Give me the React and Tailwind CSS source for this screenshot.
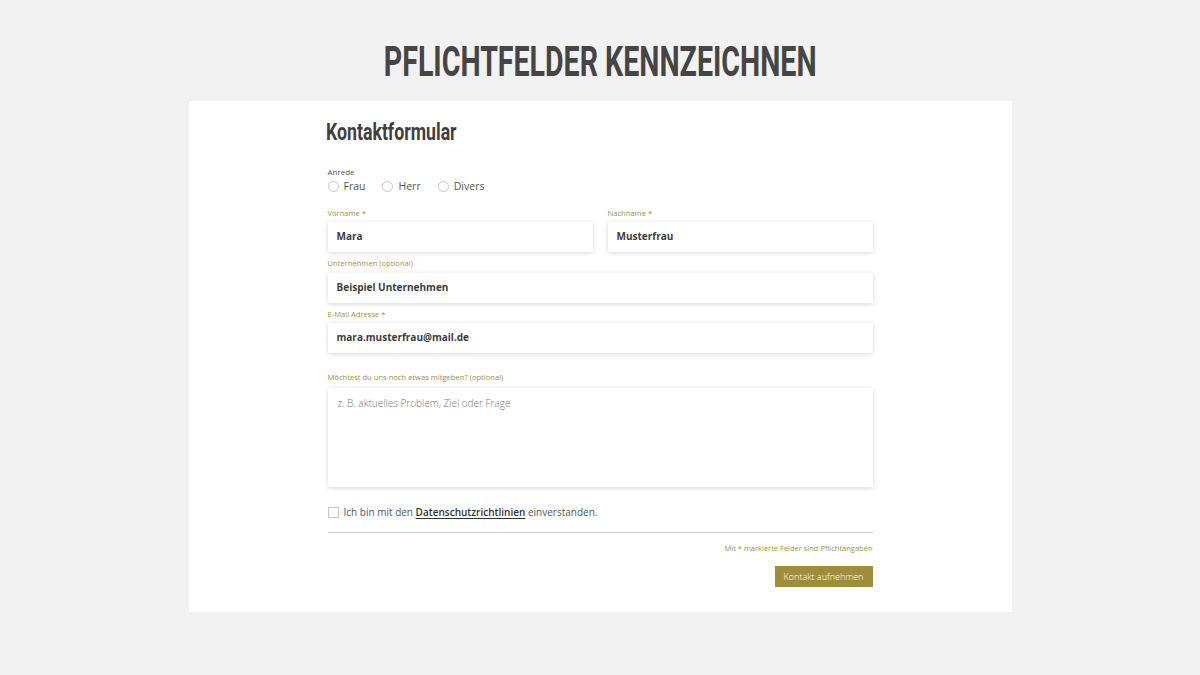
const GOLD = 'text-[#a2903f]'

function Label({ children }) {
  return <p className={`text-[7.6px] leading-[12px] ${GOLD}`}>{children}</p>
}

function Field({ value, className = '' }) {
  return (
    <div className={`h-[30px] bg-white shadow-[0_1px_5px_rgba(0,0,0,0.16)] flex items-center px-[9px] text-[10px] font-bold text-[#3d3d3d] ${className}`}>
      {value}
    </div>
  )
}

function Radio({ label }) {
  return (
    <label className="flex items-center gap-[5px] text-[10.5px] text-[#555]">
      <span className="w-[11px] h-[11px] rounded-full border border-[#c8c8c8] bg-white" />
      {label}
    </label>
  )
}

export default function App() {
  return (
    <div className="min-h-[675px] bg-[#f2f2f2] flex flex-col items-center" style={{ fontFamily: '"Open Sans", sans-serif' }}>
      <h1
        className="pt-[41px] h-[101px] text-[42px] leading-[42px] font-bold text-[#454545] uppercase scale-x-[0.68] whitespace-nowrap"
        style={{ fontFamily: 'Roboto, sans-serif' }}
      >
        Pflichtfelder kennzeichnen
      </h1>

      <div className="w-[823px] h-[511px] bg-white flex justify-center">
        <div className="w-[545px] pt-[18px]">
          <h2
            className="text-[23px] leading-[28px] font-bold text-[#3f3f3f] -ml-[2px] scale-x-[0.77] origin-left whitespace-nowrap"
            style={{ fontFamily: 'Roboto, sans-serif' }}
          >
            Kontaktformular
          </h2>

          <p className="mt-[19px] text-[8px] leading-[12px] text-[#555]">Anrede</p>
          <div className="mt-[1px] flex gap-[17px]">
            <Radio label="Frau" />
            <Radio label="Herr" />
            <Radio label="Divers" />
          </div>

          <div className="mt-[12px] grid grid-cols-2 gap-x-[15px]">
            <div>
              <Label>Vorname *</Label>
              <Field value="Mara" className="mt-[3px]" />
            </div>
            <div>
              <Label>Nachname *</Label>
              <Field value="Musterfrau" className="mt-[3px]" />
            </div>
          </div>

          <div className="mt-[5px]">
            <Label>Unternehmen (optional)</Label>
            <Field value="Beispiel Unternehmen" className="mt-[4px]" />
          </div>

          <div className="mt-[5px]">
            <Label>E-Mail Adresse *</Label>
            <Field value="mara.musterfrau@mail.de" className="mt-[3px]" />
          </div>

          <div className="mt-[18px]">
            <Label>Möchtest du uns noch etwas mitgeben? (optional)</Label>
            <div className="mt-[5px] h-[99px] bg-white shadow-[0_1px_5px_rgba(0,0,0,0.16)] px-[10px] pt-[8px] text-[10px] font-light text-[#777]">
              z. B. aktuelles Problem, Ziel oder Frage
            </div>
          </div>

          <div className="mt-[18px] flex items-center gap-[5px] text-[10px] text-[#555]">
            <span className="w-[11px] h-[11px] border border-[#c8c8c8] bg-white" />
            <span>
              Ich bin mit den{' '}
              <span className="font-semibold text-[#333] underline underline-offset-2">Datenschutzrichtlinien</span>{' '}
              einverstanden.
            </span>
          </div>

          <div className="mt-[12px] h-px bg-[#cfcfcf]" />

          <p className={`mt-[9px] text-right text-[7.5px] leading-[12px] ${GOLD}`}>Mit * markierte Felder sind Pflichtangaben</p>

          <div className="mt-[12px] flex justify-end">
            <button className="w-[98px] h-[21px] bg-[#9f8d3b] text-white text-[9px] font-light">
              Kontakt aufnehmen
            </button>
          </div>
        </div>
      </div>
    </div>
  )
}
